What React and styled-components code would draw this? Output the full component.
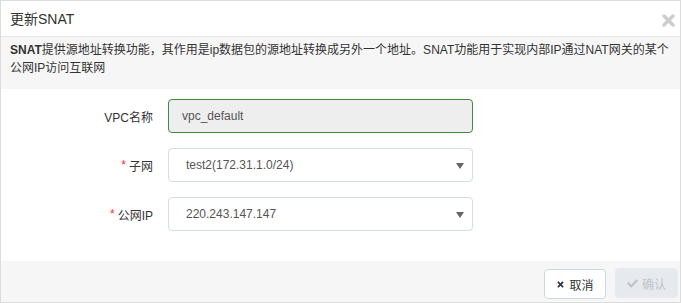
import React from "react";
import styled, { createGlobalStyle } from "styled-components";
import { FaTimes, FaCheck } from "react-icons/fa";

const Global = createGlobalStyle`
  html, body { margin: 0; padding: 0; background: #fff; }
  body { font-family: "Liberation Sans", Arial, "Noto Sans CJK SC", sans-serif; color: #333; }
  * { box-sizing: border-box; }
`;

const Dialog = styled.div`
  width: 681px;
  height: 303px;
  border: 1px solid #dcdcdc;
  display: flex;
  flex-direction: column;
  background: #fff;
`;

const Header = styled.div`
  height: 36px;
  flex: none;
  display: flex;
  align-items: center;
  justify-content: space-between;
  padding: 0 5px 1px 9px;
  border-bottom: 1px solid #e5e5e5;
`;

const Title = styled.div`
  font-size: 14px;
  color: #333;
`;

const CloseIcon = styled.svg`
  width: 13px;
  height: 13px;
  margin-top: 4px;
  display: block;
`;

const Info = styled.div`
  flex: none;
  height: 52px;
  background: #f6f6f6;
  padding: 4px 9px 0;
  font-size: 12px;
  line-height: 18px;
  color: #333;
  b { font-weight: bold; }
`;

const Form = styled.div`
  flex: none;
  display: grid;
  grid-template-columns: 152px 305px;
  column-gap: 15px;
  row-gap: 15px;
  grid-auto-rows: 34px;
  padding: 10px 0 30px;
`;

const Label = styled.label`
  display: flex;
  align-items: center;
  justify-content: flex-end;
  font-size: 12px;
  color: #333;
  white-space: pre;
`;

const Star = styled.span`
  color: #e33;
  margin-right: 3px;
`;

const Field = styled.div`
  display: flex;
  align-items: center;
  border: 1px solid ${(p) => (p.$readonly ? "#3e8b3e" : "#d3dde8")};
  background: ${(p) => (p.$readonly ? "#eeeeee" : "#fff")};
  border-radius: 4px;
  padding: ${(p) => (p.$readonly ? "0 12px 0 13px" : "0 8px 0 17px")};
`;

const Value = styled.span`
  flex: 1;
  font-family: "Liberation Sans", Arial, sans-serif;
  font-size: 12px;
  color: #555;
  white-space: nowrap;
`;

const Arrow = styled.span`
  flex: none;
  width: 0;
  height: 0;
  border-left: 4px solid transparent;
  border-right: 4px solid transparent;
  border-top: 6px solid #666;
  margin-top: 1px;
`;

const Footer = styled.div`
  flex: 1;
  background: #f6f6f6;
  display: flex;
  justify-content: flex-end;
  align-items: flex-start;
  gap: 9px;
  padding: 7px 2px 0;
`;

const Button = styled.button`
  height: 30px;
  width: ${(p) => p.$w}px;
  border-radius: 4px;
  font-family: inherit;
  font-size: 12px;
  display: flex;
  align-items: center;
  justify-content: center;
  gap: 4px;
  padding: 0;
  margin-top: ${(p) => p.$mt || 0}px;
  border: 1px solid ${(p) => (p.$disabled ? "#e6e9ee" : "#c9d7e6")};
  background: ${(p) => (p.$disabled ? "#e6e9ee" : "#fff")};
  color: ${(p) => (p.$disabled ? "#bfc4c9" : "#333")};
  svg { font-size: ${(p) => (p.$disabled ? 11 : 9)}px; }
`;

export default function App() {
  return (
    <>
      <Global />
      <Dialog>
        <Header>
          <Title>更新SNAT</Title>
          <CloseIcon viewBox="0 0 13 13">
            <path d="M2 2 L11 11 M11 2 L2 11" stroke="#cdcdcd" strokeWidth="3.4" strokeLinecap="round" />
          </CloseIcon>
        </Header>
        <Info>
          <b>SNAT</b>提供源地址转换功能，其作用是ip数据包的源地址转换成另外一个地址。SNAT功能用于实现内部IP通过NAT网关的某个
          <br />
          公网IP访问互联网
        </Info>
        <Form>
          <Label>VPC名称</Label>
          <Field $readonly><Value>vpc_default</Value></Field>
          <Label><Star>*</Star>子网</Label>
          <Field><Value>test2(172.31.1.0/24)</Value><Arrow /></Field>
          <Label><Star>*</Star>公网IP</Label>
          <Field><Value>220.243.147.147</Value><Arrow /></Field>
        </Form>
        <Footer>
          <Button $w={62} $mt={1}><FaTimes />取消</Button>
          <Button $w={63} $disabled><FaCheck />确认</Button>
        </Footer>
      </Dialog>
    </>
  );
}
